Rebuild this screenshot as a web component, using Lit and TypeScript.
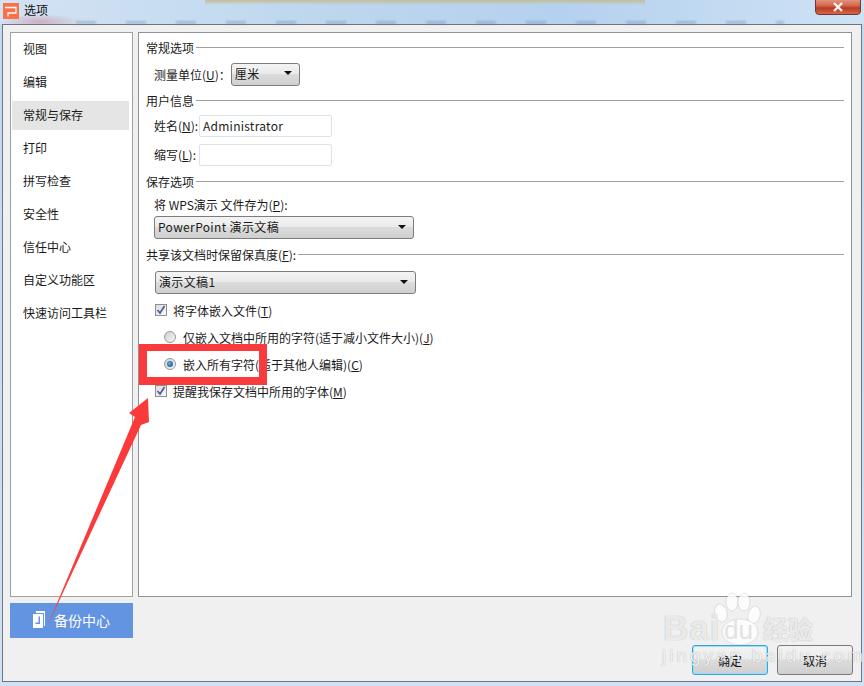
import { LitElement, html, css, svg } from "lit";
import { customElement } from "lit/decorators.js";

const menu = ["视图", "编辑", "常规与保存", "打印", "拼写检查", "安全性", "信任中心", "自定义功能区", "快速访问工具栏"];

@customElement("app-root")
export class AppRoot extends LitElement {
  static styles = css`
    :host {
      display: block;
      position: relative;
      width: 864px;
      height: 686px;
      overflow: hidden;
      font-family: "Noto Sans CJK SC", "Open Sans", sans-serif;
      font-size: 12px;
      color: #1a1a1a;
      background: linear-gradient(180deg, #c3d9ef 0%, #cfe2f5 100%);
    }
    u { text-underline-offset: 1px; }
    .chrome {
      height: 24px;
      display: flex;
      align-items: flex-start;
      position: relative;
      background:
        radial-gradient(ellipse 40px 8px at 40px 22px, rgba(205, 130, 150, .55), transparent),
        linear-gradient(90deg, #d3e3f3 0%, #bcd6ee 40%, #b4d1ee 65%, #cfe2f5 100%);
    }
    .tan {
      position: absolute;
      left: 205px;
      top: 0;
      width: 440px;
      height: 5px;
      background: linear-gradient(180deg, #c4bd98, rgba(200, 200, 180, 0));
    }
    .smudge {
      position: absolute;
      left: 76px;
      right: 80px;
      bottom: 0;
      height: 3px;
      filter: blur(1px);
      background: repeating-linear-gradient(90deg, rgba(110, 135, 170, .4) 0 20px, transparent 20px 50px);
    }
    .logo {
      width: 16px;
      height: 16px;
      margin: 3px 5px 0 3px;
      background: #fb7049;
      flex: none;
      position: relative;
    }
    .logo svg { display: block; }
    .title { line-height: 20px; color: #111; position: relative; }
    .close {
      position: absolute;
      left: 815px;
      top: -2px;
      width: 46px;
      height: 17px;
      box-sizing: border-box;
      border: 1px solid #6b3a34;
      border-radius: 0 0 4px 4px;
      background: linear-gradient(180deg, #e69a83 0%, #d2654c 45%, #b53c22 60%, #d8664a 100%);
      display: flex;
      align-items: center;
      justify-content: center;
    }
    .dialog {
      box-sizing: border-box;
      width: 860px;
      height: 658px;
      margin-left: 2px;
      border: 1px solid #6f7680;
      background: #f0f0f0;
      padding: 7px 8px 6px 7px;
      display: flex;
      flex-direction: column;
    }
    .body { display: flex; gap: 5px; height: 606px; flex: none; }
    .side { width: 123px; display: flex; flex-direction: column; gap: 6px; }
    .list {
      flex: none;
      height: 565px;
      box-sizing: border-box;
      border: 1px solid #a0a0a0;
      background: #fff;
      padding: 2px 3px 0 1px;
      display: flex;
      flex-direction: column;
      gap: 4px;
    }
    .item { height: 29px; line-height: 28px; padding-left: 11px; }
    .item.on { background: #e5e5e5; }
    .backup {
      height: 35px;
      box-sizing: border-box;
      flex: none;
      background: #6394e1;
      color: #fff;
      font-size: 14px;
      display: flex;
      align-items: center;
      gap: 8px;
      padding: 0 0 2px 23px;
    }
    .main {
      width: 714px;
      height: 565px;
      box-sizing: border-box;
      border: 1px solid #8f9399;
      background: #fff;
      padding: 5px 7px 0 7px;
      display: flex;
      flex-direction: column;
    }
    .head { display: flex; align-items: center; gap: 2px; height: 18px; white-space: nowrap; flex: none; }
    .head i { flex: 1; height: 1px; background: #a0a0a0; }
    .row { display: flex; align-items: center; white-space: nowrap; flex: none; }
    .select {
      box-sizing: border-box;
      border: 1px solid #7c7c7c;
      border-radius: 3px;
      background: linear-gradient(180deg, #f4f4f4 0%, #ebebeb 45%, #dcdcdc 50%, #cfcfcf 100%);
      display: flex;
      align-items: center;
      justify-content: space-between;
      padding: 0 7px 2px 3px;
      letter-spacing: .35px;
      height: 23px;
    }
    .w-unit { width: 69px; }
    .w-a { width: 261px; }
    .w-b { width: 260px; }
    .caret {
      width: 0;
      height: 0;
      border-left: 4px solid transparent;
      border-right: 4px solid transparent;
      border-top: 4px solid #111;
      flex: none;
    }
    .input {
      box-sizing: border-box;
      width: 133px;
      height: 22px;
      border: 1px solid #dde3ea;
      border-radius: 2px;
      background: #fff;
      line-height: 20px;
      padding-left: 3px;
      letter-spacing: .25px;
    }
    .field-label { width: 45px; padding-bottom: 2px; }
    .check {
      box-sizing: border-box;
      width: 12px;
      height: 12px;
      border: 1px solid #8e8f8f;
      background: linear-gradient(135deg, #dcdcdc, #f8f8f8);
      margin-right: 6px;
      flex: none;
      display: flex;
      align-items: center;
      justify-content: center;
    }
    .radio {
      box-sizing: border-box;
      width: 12px;
      height: 12px;
      border-radius: 50%;
      border: 1px solid #9a9a9a;
      background: linear-gradient(135deg, #d0d0d0, #f6f6f6);
      margin-right: 7px;
      flex: none;
      display: flex;
      align-items: center;
      justify-content: center;
    }
    .radio.on::after {
      content: "";
      width: 6px;
      height: 6px;
      border-radius: 50%;
      background: radial-gradient(circle at 40% 40%, #5fb3e2, #1a5f92 75%);
    }
    .r1 { margin-top: 7px; height: 22px; padding-left: 8px; }
    .r2 { margin-top: 6px; }
    .r3 { margin-top: 6px; height: 22px; padding-left: 8px; }
    .r4 { margin-top: 7px; height: 22px; padding-left: 8px; }
    .r5 { margin-top: 6px; }
    .r6 { margin-top: 5px; height: 18px; padding-left: 8px; }
    .r6b { margin-top: 3px; height: 23px; padding-left: 8px; }
    .r7 { margin-top: 6px; }
    .r8 { margin-top: 8px; height: 23px; padding-left: 9px; }
    .r9 { margin-top: 7px; height: 18px; padding-left: 9px; }
    .r10 { margin-top: 9px; height: 18px; padding-left: 18px; }
    .r11 { margin-top: 9px; height: 18px; padding-left: 18px; }
    .r12 { margin-top: 9px; height: 18px; padding-left: 9px; }
    .foot { display: flex; justify-content: flex-end; gap: 9px; margin-top: 7px; }
    .btn {
      box-sizing: border-box;
      width: 76px;
      height: 30px;
      border: 1px solid #7a7a7a;
      border-radius: 3px;
      background: linear-gradient(180deg, #f3f3f3 0%, #ececec 45%, #dddddd 50%, #cfcfcf 100%);
      color: #111;
      display: flex;
      align-items: center;
      justify-content: center;
    }
    .btn.primary { border: 1px solid #2fa8e0; box-shadow: inset 0 0 0 1px #9fdcf5; }
    .mark {
      position: absolute;
      left: 0;
      top: 0;
      pointer-events: none;
    }
    .wm {
      position: absolute;
      color: rgba(255, 255, 255, .8);
      text-shadow: 0 0 1px rgba(0, 0, 0, .35);
      font-family: "Liberation Sans", sans-serif;
      pointer-events: none;
      white-space: nowrap;
    }
    .wm.bai { left: 663px; top: 608px; font-size: 35px; font-weight: 700; line-height: 40px; letter-spacing: 1px; }
    .wm.du { left: 724px; top: 616px; font-size: 26px; line-height: 28px; color: #e2e2e2; text-shadow: none; }
    .wm.cn { left: 763px; top: 610px; font-family: "Noto Sans CJK SC", sans-serif; font-size: 25px; font-weight: 700; line-height: 36px; }
    .wm.url { left: 662px; top: 644px; font-size: 19px; line-height: 24px; letter-spacing: 3px; color: rgba(255, 255, 255, .85); }
  `;

  private check() {
    return html`<span class="check"><svg width="10" height="10" viewBox="0 0 10 10"><path d="M1.5 5 L4 8 L8.5 1" fill="none" stroke="#4a5f9a" stroke-width="1.7"/></svg></span>`;
  }

  private overlay() {
    return svg`
      <path fill-rule="evenodd" d="M139 344 H267 V385 H139Z M147 351 V377 H259 V351Z" fill="#fb3b3b"/>
      <polygon points="47,627 135,417 129,413 148,398 149,422 141,425" fill="#fb3b3b"/>
    `;
  }

  private paw() {
    return svg`
      <g fill="#fff" opacity=".8" stroke="rgba(0,0,0,.12)" stroke-width="1">
        <ellipse cx="721" cy="613" rx="6" ry="9" transform="rotate(-15 721 613)"/>
        <ellipse cx="732" cy="602" rx="6" ry="9"/>
        <ellipse cx="744" cy="602" rx="6" ry="9"/>
        <ellipse cx="754" cy="615" rx="6" ry="9" transform="rotate(15 754 615)"/>
        <ellipse cx="740" cy="632" rx="18" ry="13"/>
      </g>
    `;
  }

  render() {
    return html`
      <div class="chrome">
        <div class="tan"></div>
        <div class="smudge"></div>
        <div class="logo"><svg width="16" height="16" viewBox="0 0 16 16"><path d="M2 4.5 H13 V10 H5 V13.5" fill="none" stroke="#fff" stroke-width="1.3"/></svg></div>
        <div class="title">选项</div>
        <div class="close"><svg width="12" height="10" viewBox="0 0 12 10"><path d="M2 1 L10 9 M10 1 L2 9" stroke="#f4f4f4" stroke-width="2.4"/></svg></div>
      </div>
      <div class="dialog">
        <div class="body">
          <div class="side">
            <div class="list">
              ${menu.map((m, i) => html`<div class="item ${i === 2 ? "on" : ""}">${m}</div>`)}
            </div>
            <div class="backup">
              <svg width="13" height="17" viewBox="0 0 13 17"><path d="M3 0 H12 V15 H11 V2 H3Z" fill="#fff"/><path fill-rule="evenodd" d="M0 3 H10 V17 H0Z M5.5 5.5 V11.5 H2.5 V13 H7 V5.5Z" fill="#fff"/></svg>
              <span>备份中心</span>
            </div>
          </div>
          <div class="main">
            <div class="head"><span>常规选项</span><i></i></div>
            <div class="row r1"><span>测量单位(<u>U</u>)：</span><div class="select w-unit"><span>厘米</span><span class="caret"></span></div></div>
            <div class="head r2"><span>用户信息</span><i></i></div>
            <div class="row r3"><span class="field-label">姓名(<u>N</u>):</span><div class="input">Administrator</div></div>
            <div class="row r4"><span class="field-label">缩写(<u>L</u>):</span><div class="input"></div></div>
            <div class="head r5"><span>保存选项</span><i></i></div>
            <div class="row r6"><span>将 WPS演示 文件存为(<u>P</u>):</span></div>
            <div class="row r6b"><div class="select w-b"><span>PowerPoint 演示文稿</span><span class="caret"></span></div></div>
            <div class="head r7"><span>共享该文档时保留保真度(<u>F</u>):</span><i></i></div>
            <div class="row r8"><div class="select w-a"><span>演示文稿1</span><span class="caret"></span></div></div>
            <div class="row r9">${this.check()}<span>将字体嵌入文件(<u>T</u>)</span></div>
            <div class="row r10"><span class="radio"></span><span>仅嵌入文档中所用的字符(适于减小文件大小)(<u>J</u>)</span></div>
            <div class="row r11"><span class="radio on"></span><span>嵌入所有字符(适于其他人编辑)(<u>C</u>)</span></div>
            <div class="row r12">${this.check()}<span>提醒我保存文档中所用的字体(<u>M</u>)</span></div>
          </div>
        </div>
        <div class="foot">
          <div class="btn primary">确定</div>
          <div class="btn">取消</div>
        </div>
      </div>
      <svg class="mark" width="864" height="686" viewBox="0 0 864 686">${this.paw()}</svg>
      <div class="wm bai">Bai</div>
      <div class="wm du">du</div>
      <div class="wm cn">经验</div>
      <div class="wm url">jingyan.baidu.com</div>
      <svg class="mark" width="864" height="686" viewBox="0 0 864 686">${this.overlay()}</svg>
    `;
  }
}
